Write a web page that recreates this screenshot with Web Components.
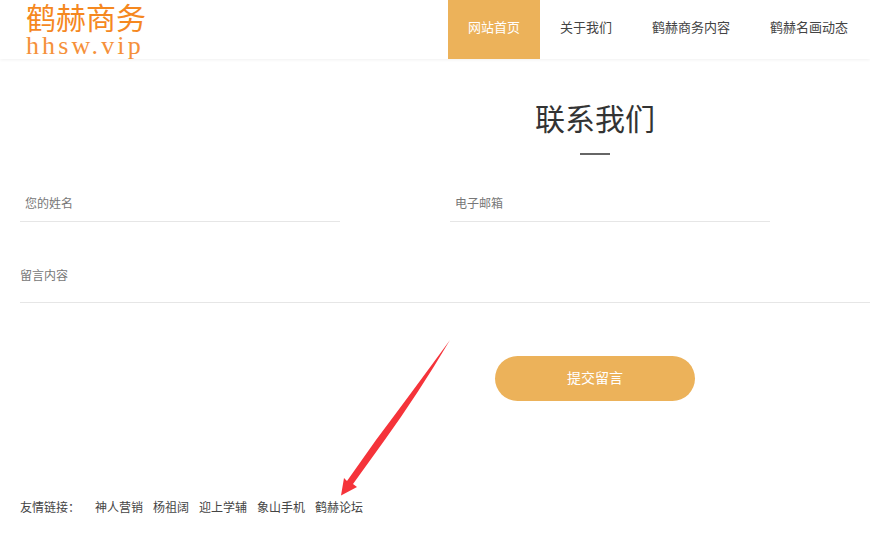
<!DOCTYPE html>
<html lang="zh-CN">
<head>
  <meta charset="UTF-8">
  <title>联系我们</title>
  <style>
    html, body { margin: 0; overflow: hidden; background: #fff; }
    body { width: 870px; height: 536px; position: relative; font-family: "Noto Sans CJK SC", sans-serif; }
  </style>
</head>
<body>
  <site-header>
    <nav-link active>网站首页</nav-link>
    <nav-link>关于我们</nav-link>
    <nav-link>鹤赫商务内容</nav-link>
    <nav-link>鹤赫名画动态</nav-link>
  </site-header>

  <contact-section>
    <form-field slot="fields">您的姓名</form-field>
    <form-field slot="fields">电子邮箱</form-field>
  </contact-section>

  <friend-links>
    <a>神人营销</a>
    <a>杨祖阔</a>
    <a>迎上学辅</a>
    <a>象山手机</a>
    <a>鹤赫论坛</a>
  </friend-links>

  <red-arrow></red-arrow>

  <script>
    class SiteHeader extends HTMLElement {
      constructor() {
        super();
        this.attachShadow({ mode: 'open' });
        this.shadowRoot.innerHTML = `
          <style>
            :host { display: flex; justify-content: space-between; height: 59px; padding: 0 2px 0 26px; box-shadow: 0 1px 3px rgba(0, 0, 0, .06); }
            .logo { color: #f5881f; }
            .name { font-size: 30px; line-height: 30px; margin-top: 1px; height: 30px; white-space: nowrap; }
            .url { font: 26px/26px "Liberation Serif", serif; letter-spacing: 3.1px; margin-top: 2px; color: #f5903a; white-space: nowrap; }
            nav { display: flex; }
          </style>
          <div class="logo">
            <div class="name">鹤赫商务</div>
            <div class="url">hhsw.vip</div>
          </div>
          <nav><slot></slot></nav>
        `;
      }
    }
    customElements.define('site-header', SiteHeader);

    class NavLink extends HTMLElement {
      constructor() {
        super();
        this.attachShadow({ mode: 'open' });
        this.shadowRoot.innerHTML = `
          <style>
            :host { display: block; padding: 0 20px; font-size: 13px; line-height: 53px; height: 59px; color: #444; white-space: nowrap; }
            :host([active]) { background: #ecb25a; color: #fff; }
          </style>
          <slot></slot>
        `;
      }
    }
    customElements.define('nav-link', NavLink);

    class FormField extends HTMLElement {
      constructor() {
        super();
        this.attachShadow({ mode: 'open' });
        this.shadowRoot.innerHTML = `
          <style>
            :host { display: block; width: 320px; height: 38px; border-bottom: 1px solid #e6e6e6; font-size: 12px; line-height: 40px; color: #777; }
            .text { padding-left: 5px; }
          </style>
          <div class="text"><slot></slot></div>
        `;
      }
    }
    customElements.define('form-field', FormField);

    class ContactSection extends HTMLElement {
      constructor() {
        super();
        this.attachShadow({ mode: 'open' });
        // the original page is wider than the window, so the heading centres at x=595
        this.shadowRoot.innerHTML = `
          <style>
            :host { display: block; width: 1150px; margin-left: 20px; }
            h2 { margin: 40px 0 0; font-size: 30px; font-weight: 400; line-height: 36px; text-align: center; color: #333; }
            .rule { width: 30px; height: 2px; background: #666; margin: 18px auto 0; }
            .fields { display: flex; gap: 110px; margin-top: 28px; }
            .message { height: 54px; margin-top: 26px; border-bottom: 1px solid #e6e6e6; font-size: 12px; line-height: 54px; color: #777; }
            .submit { display: block; width: 200px; height: 45px; margin: 53px auto 0; padding: 0 0 4px; border: 0; border-radius: 23px; background: #ecb25a; color: #fff; font: 14px/20px "Noto Sans CJK SC", sans-serif; }
          </style>
          <h2>联系我们</h2>
          <div class="rule"></div>
          <div class="fields"><slot name="fields"></slot></div>
          <div class="message">留言内容</div>
          <button class="submit">提交留言</button>
        `;
      }
    }
    customElements.define('contact-section', ContactSection);

    class FriendLinks extends HTMLElement {
      constructor() {
        super();
        this.attachShadow({ mode: 'open' });
        this.shadowRoot.innerHTML = `
          <style>
            :host { display: flex; margin: 97px 0 0 20px; font-size: 12px; line-height: 18px; color: #444; white-space: nowrap; }
            .label { margin-right: 15px; }
            .links { display: flex; gap: 10px; }
          </style>
          <span class="label">友情链接：</span>
          <div class="links"><slot></slot></div>
        `;
      }
    }
    customElements.define('friend-links', FriendLinks);

    // annotation drawn over the page, so it is placed on its own
    class RedArrow extends HTMLElement {
      constructor() {
        super();
        this.attachShadow({ mode: 'open' });
        this.shadowRoot.innerHTML = `
          <style>
            :host { position: absolute; left: 335px; top: 335px; width: 120px; height: 165px; }
            svg { display: block; }
          </style>
          <svg width="120" height="165" viewBox="335 335 120 165">
            <path d="M450 340Q418 394 384 441L353 484L357 487L341 495.5L344 478L347 481L376 440Q412 392 450 340Z" fill="#f5333a"/>
          </svg>
        `;
      }
    }
    customElements.define('red-arrow', RedArrow);
  </script>
</body>
</html>
